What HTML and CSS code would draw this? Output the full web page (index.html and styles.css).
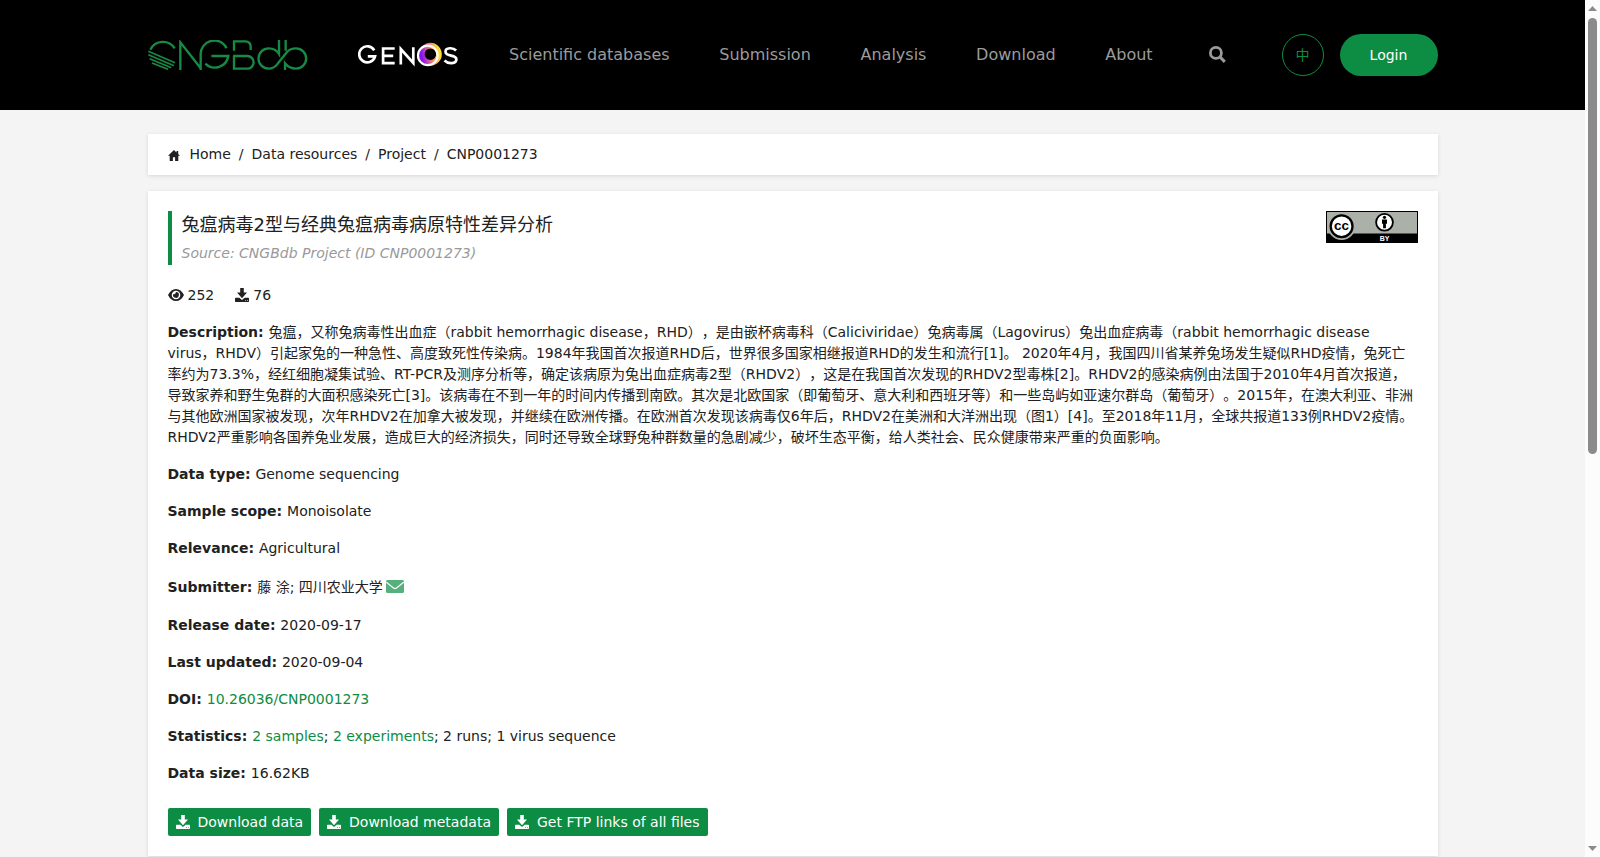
FILE: index.html
```html
<!DOCTYPE html>
<html lang="en">
<head>
<meta charset="utf-8">
<title>CNP0001273 - CNGBdb</title>
<link rel="stylesheet" href="styles.css">
</head>
<body>
<svg class="defs" width="0" height="0">
  <symbol id="download" viewBox="0 0 14 14"><path d="M5.2 0h3.6v4.500h3.200L7 10.200 2 4.500h3.200zM.7 9.700h3.600L7 12.100l2.700-2.400h3.600q.7 0 .7.7v2.900q0 .7-.7.7H.7q-.7 0-.7-.7v-2.900q0-.7.7-.7zm9.500 2.500v.7h.8v-.7zm1.800 0v.7h.8v-.7z" fill-rule="evenodd"/></symbol>
</svg>
<div class="window">
<div class="page">
  <header class="header">
    <div class="container bar">
      <svg class="logo" viewBox="0 0 480 90" fill="none" stroke="#178a44" stroke-width="7">
        <path d="M7 29A42 42 0 0 1 80 25"/>
        <path d="M1 34L81 68M1 44L78 77M5 56L70 83M12 69L60 88" stroke-width="4.8"/>
        <path d="M97 90V7L158 85M158 90V45A41 41 0 0 1 236 25M172 71A41 41 0 0 0 241 48H190"/>
        <path d="M258 32V4H292Q308 5 308 20V30M255 48H298A19 19 0 0 1 298 86H258V48"/>
        <path d="M393 0V42Q383 25 362 25A30.5 30.5 0 0 0 362 86Q378 86 390 70L417 36Q427 25 444 25A30.5 30.5 0 0 1 444 86Q424 86 411 70V90M413 0V32"/>
      </svg>
      <svg class="genos" viewBox="0 0 102 26">
        <defs><linearGradient id="ring" x1="0" x2="1" y1=".6" y2=".4"><stop offset="0" stop-color="#8a10f5"/><stop offset=".5" stop-color="#f47a72"/><stop offset="1" stop-color="#ffdc38"/></linearGradient></defs>
        <g fill="none" stroke="#fff" stroke-width="2.7">
          <path d="M16.2 8.3A8 8 0 1 0 17 14.3H9.8M36.7 6.5H25.1V21.2H36.7M25.1 13.8H35.2M42.8 22.4V7L55.3 21V5.2M98.1 8.5C95.3 5.4 87.5 5.2 87.5 9.7C87.5 15 98.4 12.2 98.4 17.3C98.4 22 90.3 22.3 86.5 18.5"/>
        </g>
        <circle cx="72.4" cy="12.2" r="8.6" fill="none" stroke="url(#ring)" stroke-width="5.6"/>
        <circle cx="69.8" cy="13.4" r="9.8" fill="none" stroke="#fff" stroke-width="2.2"/>
      </svg>
      <nav class="nav"><a>Scientific databases</a><a>Submission</a><a>Analysis</a><a>Download</a><a>About</a></nav>
      <svg class="search" viewBox="0 0 17 17" fill="none" stroke="#9b9b9b"><circle cx="6.9" cy="6.9" r="5.5" stroke-width="2.8"/><path d="M11 11L15.8 15.8" stroke-width="3.1"/></svg>
      <a class="lang">中</a>
      <a class="login">Login</a>
    </div>
  </header>
  <main class="container">
    <div class="card crumbs">
      <svg class="home" viewBox="0 0 12 11"><path d="M6 0L0 5.8h1.7V11h3.2V7.2h2.2V11h3.2V5.8H12L10.2 4V.9H8.5v1.5z"/></svg>
      <span>Home</span><i>/</i><span>Data resources</span><i>/</i><span>Project</span><i>/</i><span>CNP0001273</span>
    </div>
    <div class="card detail">
      <div class="head">
        <div class="heading">
          <h1>兔瘟病毒2型与经典兔瘟病毒病原特性差异分析</h1>
          <div class="source">Source: CNGBdb Project (ID CNP0001273)</div>
        </div>
        <svg class="license" viewBox="0 0 92 32">
          <rect width="92" height="32" fill="#000"/><rect x="1" y="1" width="90" height="21.5" fill="#abb1a8"/>
          <circle cx="15.6" cy="15.2" r="13.8" fill="#abb1a8"/><circle cx="15.6" cy="15.2" r="10.9" fill="#fff" stroke="#000" stroke-width="2.3"/>
          <text x="15.6" y="19" class="cc">cc</text>
          <circle cx="58.5" cy="11.3" r="8.4" fill="#fff" stroke="#000" stroke-width="1.8"/>
          <circle cx="58.5" cy="6.3" r="1.6"/><path d="M56 8.4h5v4.4h-1.1v4.4h-2.8v-4.4H56z"/>
          <text x="58.5" y="30" class="by">BY</text>
        </svg>
      </div>
      <div class="counts">
        <span><svg class="eye" viewBox="0 0 16 12"><path fill-rule="evenodd" d="M8 0Q13 0 16 6Q13 12 8 12Q3 12 0 6Q3 0 8 0zM8 1.7a4.3 4.3 0 1 0 0 8.6a4.3 4.3 0 1 0 0-8.6zM8 3.1A2.9 2.9 0 1 1 5.3 5Q7.5 6 8 3.1z"/></svg>252</span>
        <span><svg class="dl"><use href="#download"/></svg>76</span>
      </div>
      <p><b>Description: </b>兔瘟，又称兔病毒性出血症（rabbit hemorrhagic disease，RHD），是由嵌杯病毒科（Caliciviridae）兔病毒属（Lagovirus）兔出血症病毒（rabbit hemorrhagic disease virus，RHDV）引起家兔的一种急性、高度致死性传染病。1984年我国首次报道RHD后，世界很多国家相继报道RHD的发生和流行[1]。 2020年4月，我国四川省某养兔场发生疑似RHD疫情，兔死亡率约为73.3%，经红细胞凝集试验、RT-PCR及测序分析等，确定该病原为兔出血症病毒2型（RHDV2），这是在我国首次发现的RHDV2型毒株[2]。RHDV2的感染病例由法国于2010年4月首次报道，导致家养和野生兔群的大面积感染死亡[3]。该病毒在不到一年的时间内传播到南欧。其次是北欧国家（即葡萄牙、意大利和西班牙等）和一些岛屿如亚速尔群岛（葡萄牙）。2015年，在澳大利亚、非洲与其他欧洲国家被发现，次年RHDV2在加拿大被发现，并继续在欧洲传播。在欧洲首次发现该病毒仅6年后，RHDV2在美洲和大洋洲出现（图1）[4]。至2018年11月，全球共报道133例RHDV2疫情。RHDV2严重影响各国养兔业发展，造成巨大的经济损失，同时还导致全球野兔种群数量的急剧减少，破坏生态平衡，给人类社会、民众健康带来严重的负面影响。</p>
      <p><b>Data type: </b>Genome sequencing</p>
      <p><b>Sample scope: </b>Monoisolate</p>
      <p><b>Relevance: </b>Agricultural</p>
      <p class="submitter"><span><b>Submitter: </b>藤 涂; 四川农业大学</span><svg class="mail" viewBox="0 0 18 13"><rect width="18" height="13" rx="1.5" fill="#55b07c"/><path d="M.3 2.2L7.5 8Q9 9.2 10.5 8L17.7 2.2" fill="none" stroke="#fff" stroke-width="1.1"/></svg></p>
      <p><b>Release date: </b>2020-09-17</p>
      <p><b>Last updated: </b>2020-09-04</p>
      <p><b>DOI: </b><a>10.26036/CNP0001273</a></p>
      <p><b>Statistics: </b><a>2 samples</a>; <a>2 experiments</a>; 2 runs; 1 virus sequence</p>
      <p><b>Data size: </b>16.62KB</p>
      <div class="actions">
        <a class="btn"><svg class="dl"><use href="#download"/></svg>Download data</a>
        <a class="btn"><svg class="dl"><use href="#download"/></svg>Download metadata</a>
        <a class="btn"><svg class="dl"><use href="#download"/></svg>Get FTP links of all files</a>
      </div>
    </div>
  </main>
</div>
<div class="scrollbar">
  <svg viewBox="0 0 9 5"><path d="M4.5 0L9 5H0z"/></svg>
  <div class="thumb"></div>
  <svg class="down" viewBox="0 0 9 5"><path d="M0 0H9L4.5 5z"/></svg>
</div>
</div>
</body>
</html>
```
FILE: styles.css
```css
* { box-sizing: border-box; }
body {
  margin: 0;
  background: #f4f4f4;
  color: #212121;
  font: 14px/21px "DejaVu Sans", "Noto Sans CJK SC", sans-serif;
  text-spacing-trim: space-all;
  overflow: hidden;
}
.defs { display: block; }
.window { display: flex; height: 857px; overflow: hidden; }
.page { flex: 1; min-width: 0; }
.container { width: 1290px; margin: 0 auto; }
.header { background: #000; height: 110px; }
.bar { display: flex; align-items: center; height: 110px; }
.logo { width: 160px; height: 30px; }
.genos { width: 102px; height: 26px; margin: 0 0 0 50px; }
.nav { display: flex; gap: 49.7px; margin-left: 49.5px; font-size: 16px; line-height: 24px; color: #9b9b9b; }
.search { width: 17px; height: 17px; margin: 0 0 1px 56px; }
.lang {
  width: 42px; height: 42px; margin-left: auto;
  border: 1px solid #0d8c43; border-radius: 50%;
  color: #0d8c43; text-align: center; line-height: 40px;
}
.login {
  width: 98px; height: 42px; margin-left: 16px;
  border-radius: 21px; background: #0d8c43; color: #fff;
  text-align: center; line-height: 42px;
}
.card { background: #fff; box-shadow: 0 1px 4px rgba(0, 0, 0, .12); }
.crumbs { display: flex; align-items: center; height: 41px; margin: 24px 0 16px; padding: 0 20px; }
.crumbs i { font-style: normal; margin: 0 8px; }
.home { width: 12px; height: 11px; margin: 1px 9.5px 0 .5px; fill: #212121; }
.detail { height: 665px; padding: 20px; }
.head { display: flex; justify-content: space-between; align-items: flex-start; }
.heading { height: 54px; border-left: 4px solid #0d8c43; padding-left: 10px; }
h1 { margin: 0; font-size: 18px; font-weight: 400; line-height: 27px; }
.source { padding-top: 5px; font-style: italic; color: #999; }
.license { width: 92px; height: 32px; }
.cc { font: 700 13.5px "Liberation Sans", sans-serif; text-anchor: middle; }
.by { font: 700 7px "Liberation Sans", sans-serif; text-anchor: middle; fill: #fff; }
.counts { display: flex; gap: 21px; margin-top: 20px; }
.counts span { display: flex; align-items: center; gap: 4px; }
.counts svg { margin-bottom: 2px; }
.eye { width: 16px; height: 12px; fill: #212121; }
.dl { width: 14px; height: 14px; fill: currentColor; }
p { margin: 16px 0 0; }
p a { color: #0d8c43; }
.submitter { display: flex; align-items: center; height: 24px; gap: 3px; }
.mail { width: 18px; height: 13px; margin-bottom: 2px; }
.actions { display: flex; gap: 8px; margin-top: 24px; }
.btn {
  display: flex; align-items: center; gap: 8px; height: 28px; padding: 0 8px;
  border-radius: 2px; background: #0d8c43; color: #fff;
}
.btn .dl { margin-bottom: 1px; }
.scrollbar {
  width: 15px; height: 857px; padding: 6px 0; background: #fcfcfc;
  display: flex; flex-direction: column; align-items: center;
}
.scrollbar svg { width: 9px; height: 5px; fill: #8b8b8b; }
.thumb { width: 9px; height: 436px; margin-top: 7px; border-radius: 5px; background: #8b8b8b; }
.scrollbar .down { margin-top: auto; }
```
